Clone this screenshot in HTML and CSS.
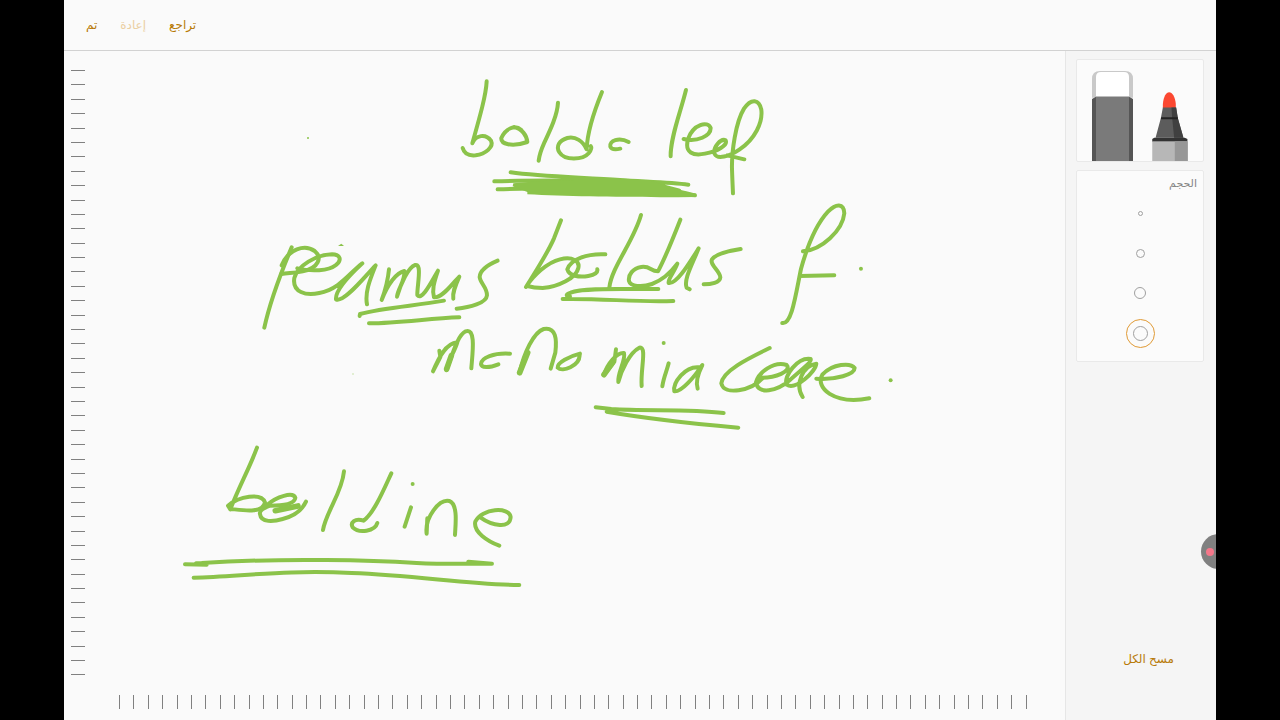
FILE: index.html
```html
<!DOCTYPE html>
<html lang="ar">
  <head>
    <meta charset="UTF-8" />
    <meta name="viewport" content="width=device-width, initial-scale=1.0" />
    <title>boldo leaf</title>
    <link rel="stylesheet" href="styles.css">
  </head>
  <body>
    <div class="app">
      <header class="topbar">
        <button type="button" class="link-btn">تم</button>
        <button type="button" class="link-btn" disabled>إعادة</button>
        <button type="button" class="link-btn">تراجع</button>
      </header>

      <div class="workspace">
        <main class="board">
          <div class="ruler ruler-left" data-ticks="43"></div>
          <div class="ruler ruler-bottom" data-ticks="64"></div>

          <svg class="drawing" viewBox="0 0 1001 669" preserveAspectRatio="xMinYMin meet" role="img" aria-label="bold leaf, peumus boldus, monomiaceae, boldine">
            <!-- bold leaf -->
            <g transform="translate(376 19) scale(.3333)">
              <path d="M140 34C138 75 121 135 97 220C107 195 137 190 153 212C162 231 137 252 107 256C87 258 73 252 68 234" />
              <path d="M244 180C225 163 197 175 184 204C182 222 215 232 262 216C260 196 246 176 222 171" />
              <path d="M354 98C352 137 330 182 312 220C303 240 298 256 296 272" />
              <path d="M486 66C463 122 442 182 440 238C429 214 407 198 382 204C358 211 347 229 358 247C374 273 429 270 446 250C454 240 455 232 452 228" />
              <path d="M566 216C537 200 507 212 511 230C514 238 528 239 541 236" />
              <path d="M738 60C722 126 691 202 692 259" />
              <path d="M731 207C771 217 813 198 812 174C804 151 760 163 745 205C731 250 762 258 795 251C832 244 864 226 857 211C843 204 818 232 824 252C832 269 867 260 898 239C945 208 969 157 964 119C958 88 934 83 912 116C887 157 875 245 876 295C877 326 878 347 879 370M862 256L913 268" />
              <path d="M212 307C302 320 432 322 540 330C610 335 690 337 745 344M163 334C340 328 490 333 595 335C650 342 690 354 718 362M173 358C350 350 590 366 765 376" />
              <path class="fill" d="M220 340C350 326 480 330 625 330C680 350 735 363 768 371L766 381C600 383 400 380 262 373L262 366L218 349Z" />
            </g>

            <!-- peumus -->
            <g transform="translate(186 149) scale(.3333)">
              <path d="M125 142C93 218 61 300 43 383" />
              <path d="M95 196C115 147 164 132 194 153C218 173 205 205 158 214C132 220 112 218 94 222" />
              <path d="M142 205C184 215 236 213 258 195C276 180 272 164 246 163C199 163 142 198 133 234C126 277 168 288 208 279C269 268 302 215 337 190C308 217 255 269 258 298C282 309 341 233 377 196C360 239 344 277 351 313" />
              <path d="M417 208C414 239 406 270 395 300C413 253 439 218 463 213C466 242 444 265 441 290C453 250 474 203 496 195C517 190 501 260 502 285C516 304 545 244 564 212C551 250 546 270 552 292C577 295 606 251 628 230C614 261 607 279 610 296" />
              <path d="M743 182C710 196 690 211 689 231C691 250 712 263 711 286C709 309 660 323 620 326" />
              <path d="M582 302C499 317 398 323 330 342L329 348M357 370C450 369 540 355 628 352" />
              <path class="fill" d="M264 138L274 131L282 138Z" />
            </g>

            <!-- boldus f. -->
            <g transform="translate(446 144) scale(.3333)">
              <path d="M153 76L132 130C110 180 74 234 48 276C69 242 112 202 150 193C188 184 210 198 205 219C199 249 145 275 98 279C73 279 65 277 52 273" />
              <path d="M286 178C233 175 182 192 172 223C178 243 207 248 235 243C255 239 264 232 262 223" />
              <path d="M393 60C372 137 304 218 298 278" />
              <path d="M511 74C484 143 460 199 444 229C421 229 421 212 394 216C369 220 354 239 357 258C361 274 394 278 426 267C464 253 485 229 502 206C493 232 473 252 476 264C499 269 536 208 566 160C547 208 520 255 530 278L539 283" />
              <path d="M692 162C648 169 615 179 606 193C598 209 631 228 631 247C630 263 603 268 581 268" />
              <path d="M445 282C365 284 221 276 182 293C165 298 168 305 180 304M158 312C270 309 387 323 490 318" />
              <path d="M879 169C935 165 998 106 1003 55C1002 24 978 25 954 50C916 91 892 153 873 222C857 300 845 390 817 384M869 243L973 241" />
              <circle class="dot" cx="1053" cy="221" r="6" />
            </g>

            <!-- monomiaceae. -->
            <g transform="translate(356 269) scale(.3333)">
              <path d="M58 92L61 111L39 154C55 115 77 70 112 67C104 94 83 125 79 151C96 109 111 47 137 34C169 22 157 103 154 145" />
              <path d="M270 101C221 98 184 113 183 132C184 144 207 144 235 133" />
              <path class="thick" d="M94 107L80 147M323 98L299 158" />
              <path d="M298 160C312 98 341 37 371 27C408 20 411 58 406 98L392 146" />
              <path d="M480 101C449 109 411 127 413 143C428 158 478 137 479 106" />
            </g>
            <g transform="translate(526 279) scale(.3333)">
              <path d="M78 58L73 95L42 134C52 101 80 67 102 69C108 91 82 129 85 156C94 120 119 68 148 53C172 49 151 117 155 168" />
              <path class="thick" d="M66 100L42 134" />
              <path d="M236 100C229 127 221 142 217 169M329 112C286 106 248 158 253 184C274 187 312 142 337 105C323 133 316 155 323 176" />
              <path d="M539 54C491 78 399 119 394 160C402 198 484 182 517 145" />
              <path d="M506 143C558 145 606 123 590 105C551 92 506 128 498 157C504 196 561 184 599 151C631 121 667 96 662 87C624 81 579 138 590 164C617 182 678 124 679 101C638 106 614 164 638 201" />
              <path d="M679 146C738 150 794 133 794 114C782 98 729 100 697 134C675 173 731 225 838 205" />
              <circle class="dot" cx="221" cy="39" r="6" />
              <circle class="dot" cx="902" cy="151" r="6" />
              <path d="M17 232L64 237C170 244 294 236 401 249M50 245C160 264 314 281 445 293" />
            </g>

            <!-- boldine -->
            <g transform="translate(106 384) scale(.3333)">
              <path d="M261 38C238 100 208 153 181 223L174 212C207 184 274 172 285 202C279 236 221 226 184 222" />
              <path d="M291 210C320 184 369 170 376 188C374 206 341 212 300 212C281 219 267 225 270 237C273 264 311 260 338 252C374 243 397 224 408 200" />
              <path class="thick" d="M316 227L384 213" />
              <path d="M522 109C516 174 468 231 459 285M664 115C639 169 613 232 581 257C555 248 540 263 548 277C567 296 615 289 622 264" />
              <path d="M723 217L704 275M772 250L770 296C764 247 808 191 838 198C864 207 857 266 855 300" />
              <path d="M931 247C967 273 1021 282 1022 246C1018 214 936 219 916 260C909 291 954 319 988 332" />
              <circle class="dot" cx="728" cy="147" r="6" />
              <path d="M45 388L110 389C75 389 65 384 95 384C350 368 620 377 740 384C820 388 890 387 966 386L895 380M71 428C215 424 347 404 545 414C740 421 896 449 1048 450" />
            </g>

            <circle class="dot" cx="244" cy="87" r="1" />
            <circle class="dot faint" cx="289" cy="323" r="1" />
          </svg>
        </main>

        <aside class="sidebar">
          <div class="card tools">
            <button type="button" class="tool" aria-label="ممحاة">
              <svg width="41" height="90" viewBox="0 0 123 270">
                <path fill="#c9c9c9" d="M0 80V24Q0 0 24 0H99Q123 0 123 24V80Z" />
                <path fill="#fff" d="M12 80V18Q12 3 27 3H96Q111 3 111 18V80Z" />
                <path fill="#555" d="M0 84L12 77H111L123 84V270H0Z" />
                <path fill="#7a7a7a" d="M12 77H111V270H12Z" />
              </svg>
            </button>
            <button type="button" class="tool" aria-label="قلم">
              <svg width="36" height="69" viewBox="0 0 107 208">
                <path fill="#fb4831" d="M32 48V36C34 14 42 1 51 1S69 14 71 36V48Z" />
                <path fill="#5c5c5c" d="M32 47H72L77 78L94 138H10L26 78Z" />
                <path fill="#404040" d="M58 47H72L77 78L94 138H66L60 78Z" />
                <path fill="#222" d="M27 76H77V82H26Z" />
                <path fill="#333" d="M6 138H98L106 142V150H0V142Z" />
                <path fill="#b7b7b7" d="M0 149H107V208H0Z" />
                <path fill="#979797" d="M68 149H107V208H68Z" />
              </svg>
            </button>
          </div>

          <fieldset class="card sizes">
            <legend>الحجم</legend>
            <label class="size"><input type="radio" name="size" class="s1" aria-label="1"></label>
            <label class="size"><input type="radio" name="size" class="s2" aria-label="2"></label>
            <label class="size"><input type="radio" name="size" class="s3" aria-label="3"></label>
            <label class="size"><input type="radio" name="size" class="s4" aria-label="4" checked></label>
          </fieldset>

          <button type="button" class="link-btn clear">مسح الكل</button>
        </aside>
      </div>

      <button type="button" class="record" aria-label="تسجيل"></button>
    </div>

    <script>
      document.querySelectorAll(".ruler").forEach((ruler) => {
        for (let i = 0; i < ruler.dataset.ticks; i++) {
          ruler.appendChild(document.createElement("i"));
        }
      });
    </script>
  </body>
</html>
```

FILE: styles.css
```css
* {
  margin: 0;
  padding: 0;
  box-sizing: border-box;
}
body {
  min-height: 100vh;
  padding: 0 5%;
  background: #000;
  font-family: "Noto Sans", "DejaVu Sans", sans-serif;
}
button {
  border: none;
  background: none;
  font-family: inherit;
  cursor: pointer;
}
.app {
  position: relative;
  display: flex;
  flex-direction: column;
  min-height: 100vh;
  background: #fafafa;
  overflow: hidden;
}
.topbar {
  display: flex;
  align-items: center;
  gap: 23px;
  padding: 14px 22px;
  border-bottom: 1px solid #d2d2d2;
}
.link-btn {
  color: #b87a08;
  font-size: 12px;
  line-height: 22px;
}
.link-btn:disabled {
  color: #ebcfa2;
}
.workspace {
  display: flex;
  flex: 1;
}

/* drawing board */
.board {
  position: relative;
  flex: 1;
  display: grid;
  grid-template-columns: 14px 1fr;
  grid-template-rows: 1fr 14px;
  column-gap: 34px;
  row-gap: 19px;
  padding: 19px 38px 11px 7px;
}
.ruler {
  display: flex;
  justify-content: space-between;
}
.ruler i {
  background: #808080;
}
.ruler-left {
  flex-direction: column;
}
.ruler-left i {
  height: 1px;
}
.ruler-bottom {
  grid-column: 2;
  grid-row: 2;
}
.ruler-bottom i {
  width: 1px;
}
.drawing {
  position: absolute;
  top: 0;
  left: 0;
  width: 100%;
  height: 100%;
}
.drawing path {
  fill: none;
  stroke: #8bc34a;
  stroke-width: 12;
  stroke-linecap: round;
  stroke-linejoin: round;
}
.drawing .thick {
  stroke-width: 17;
}
.drawing .fill {
  fill: #8bc34a;
  stroke: none;
}
.drawing .dot {
  fill: #8bc34a;
}
.drawing .faint {
  opacity: 0.3;
}

/* side panel */
.sidebar {
  display: flex;
  flex-direction: column;
  width: 151px;
  padding: 8px 12px 50px 10px;
  border-left: 1px solid #e6e6e6;
  background: #f5f5f5;
}
.card {
  border: 1px solid #e9e9e9;
  border-radius: 2px;
  background: #fbfbfb;
}
.tools {
  display: flex;
  align-items: flex-end;
  gap: 19px;
  padding: 11px 15px 0;
}
.tool svg {
  display: block;
}
.sizes {
  display: flex;
  flex-direction: column;
  align-items: center;
  margin-top: 8px;
  padding: 0 6px 8px;
}
.sizes legend {
  float: right;
  width: 100%;
  padding-top: 1px;
  color: #858585;
  font-size: 11px;
  line-height: 21px;
  text-align: right;
}
.size {
  display: flex;
  align-items: center;
  justify-content: center;
  width: 40px;
  height: 40px;
}
.size input {
  appearance: none;
  border: 1px solid #a0a0a0;
  border-radius: 50%;
  cursor: pointer;
}
.size input:checked {
  outline: 1px solid #e09a35;
  outline-offset: 6px;
}
.s1 {
  width: 5px;
  height: 5px;
}
.s2 {
  width: 9px;
  height: 9px;
}
.s3 {
  width: 12px;
  height: 12px;
}
.s4 {
  width: 15px;
  height: 15px;
}
.clear {
  align-self: center;
  margin-top: auto;
  padding-left: 17px;
}

/* floating record button, half off the edge */
.record {
  position: absolute;
  right: -20px;
  bottom: 151px;
  width: 35px;
  height: 35px;
  border-radius: 50%;
  background: #808080;
}
.record::before {
  content: "";
  position: absolute;
  top: 14px;
  left: 5px;
  width: 8px;
  height: 8px;
  border-radius: 50%;
  background: #f5778a;
}
```
